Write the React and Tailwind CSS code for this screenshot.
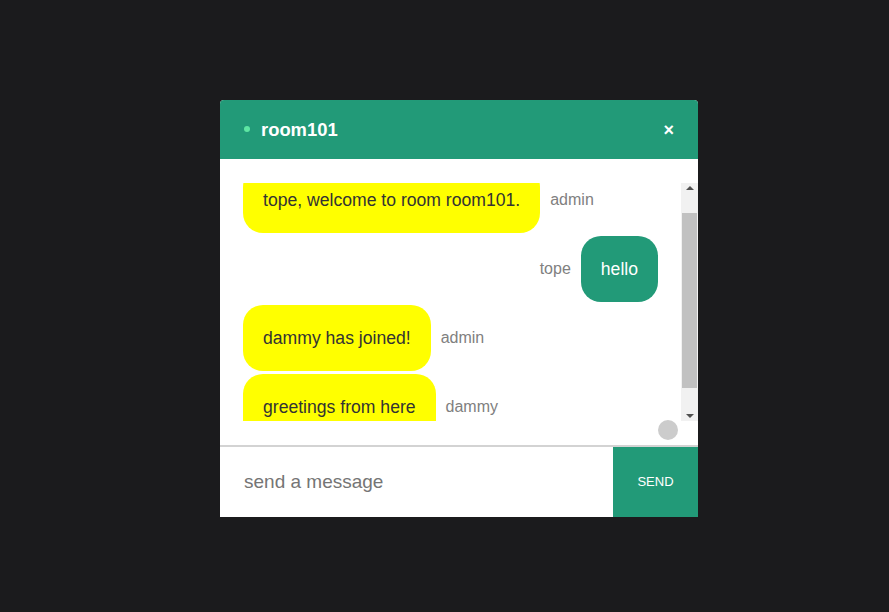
import React from 'react';

const messages = [
  { text: 'tope, welcome to room room101.', user: 'admin', mine: false },
  { text: 'hello', user: 'tope', mine: true },
  { text: 'dammy has joined!', user: 'admin', mine: false },
  { text: 'greetings from here', user: 'dammy', mine: false },
];

const Message = ({ text, user, mine }) => {
  if (mine) {
    return (
      <div className="flex items-center justify-end">
        <span className="mr-[10px] text-[16px] text-[#808080]">{user}</span>
        <div className="rounded-[20px] bg-[#229a78] px-[20px] py-[23px] text-[17.6px] leading-[20px] text-white">
          {text}
        </div>
      </div>
    );
  }
  return (
    <div className="flex items-center">
      <div className="rounded-[20px] bg-[#ffff00] px-[20px] py-[23px] text-[17.6px] leading-[20px] text-[#333]">
        {text}
      </div>
      <span className="ml-[10px] text-[16px] text-[#808080]">{user}</span>
    </div>
  );
};

const ScrollBar = () => (
  <div className="flex w-[17px] flex-col bg-[#f1f1f1]">
    <div className="flex h-[10px] items-center justify-center">
      <div className="h-0 w-0 border-x-[4px] border-b-[4px] border-x-transparent border-b-[#505050]" />
    </div>
    <div className="h-[20px]" />
    <div className="mx-[1px] h-[175px] bg-[#c1c1c1]" />
    <div className="flex-1" />
    <div className="flex h-[10px] items-center justify-center">
      <div className="h-0 w-0 border-x-[4px] border-t-[4px] border-x-transparent border-t-[#505050]" />
    </div>
  </div>
);

export default function App() {
  return (
    <div
      className="min-h-[612px] bg-[#1b1b1d] pl-[220px] pt-[100px]"
      style={{ fontFamily: '"Liberation Sans", Arial, sans-serif' }}
    >
      <div className="w-[478px] overflow-hidden rounded-t-[4px] bg-white">
        {/* header */}
        <div className="flex h-[59px] items-center justify-between bg-[#229a78] pl-[24px] pr-[24px]">
          <div className="flex items-center">
            <span className="h-[6px] w-[6px] rounded-full bg-[#5ee6a3]" />
            <span className="ml-[11px] text-[18.4px] font-bold text-white">room101</span>
          </div>
          <span className="text-[18px] font-bold leading-none text-white">×</span>
        </div>

        {/* messages */}
        <div className="pt-[24px]">
          <div className="flex h-[238px]">
            <div className="flex-1 overflow-hidden pl-[23px] pr-[23px]">
              <div className="-mt-[16px] flex flex-col gap-[3px]">
                {messages.map((m, i) => (
                  <Message key={i} {...m} />
                ))}
              </div>
            </div>
            <ScrollBar />
          </div>
          <div className="flex h-[24px] items-center justify-end pr-[20px]">
            <div className="-mt-[6px] h-[20px] w-[20px] rounded-full bg-[#cccccc]" />
          </div>
        </div>

        {/* input */}
        <div className="flex h-[72px] border-t-2 border-[#d3d3d3]">
          <input
            className="flex-1 bg-white pl-[24px] text-[19px] text-[#333] outline-none placeholder:text-[#757575]"
            placeholder="send a message"
          />
          <button className="w-[85px] bg-[#229a78] text-[13px] text-white">SEND</button>
        </div>
      </div>
    </div>
  );
}
